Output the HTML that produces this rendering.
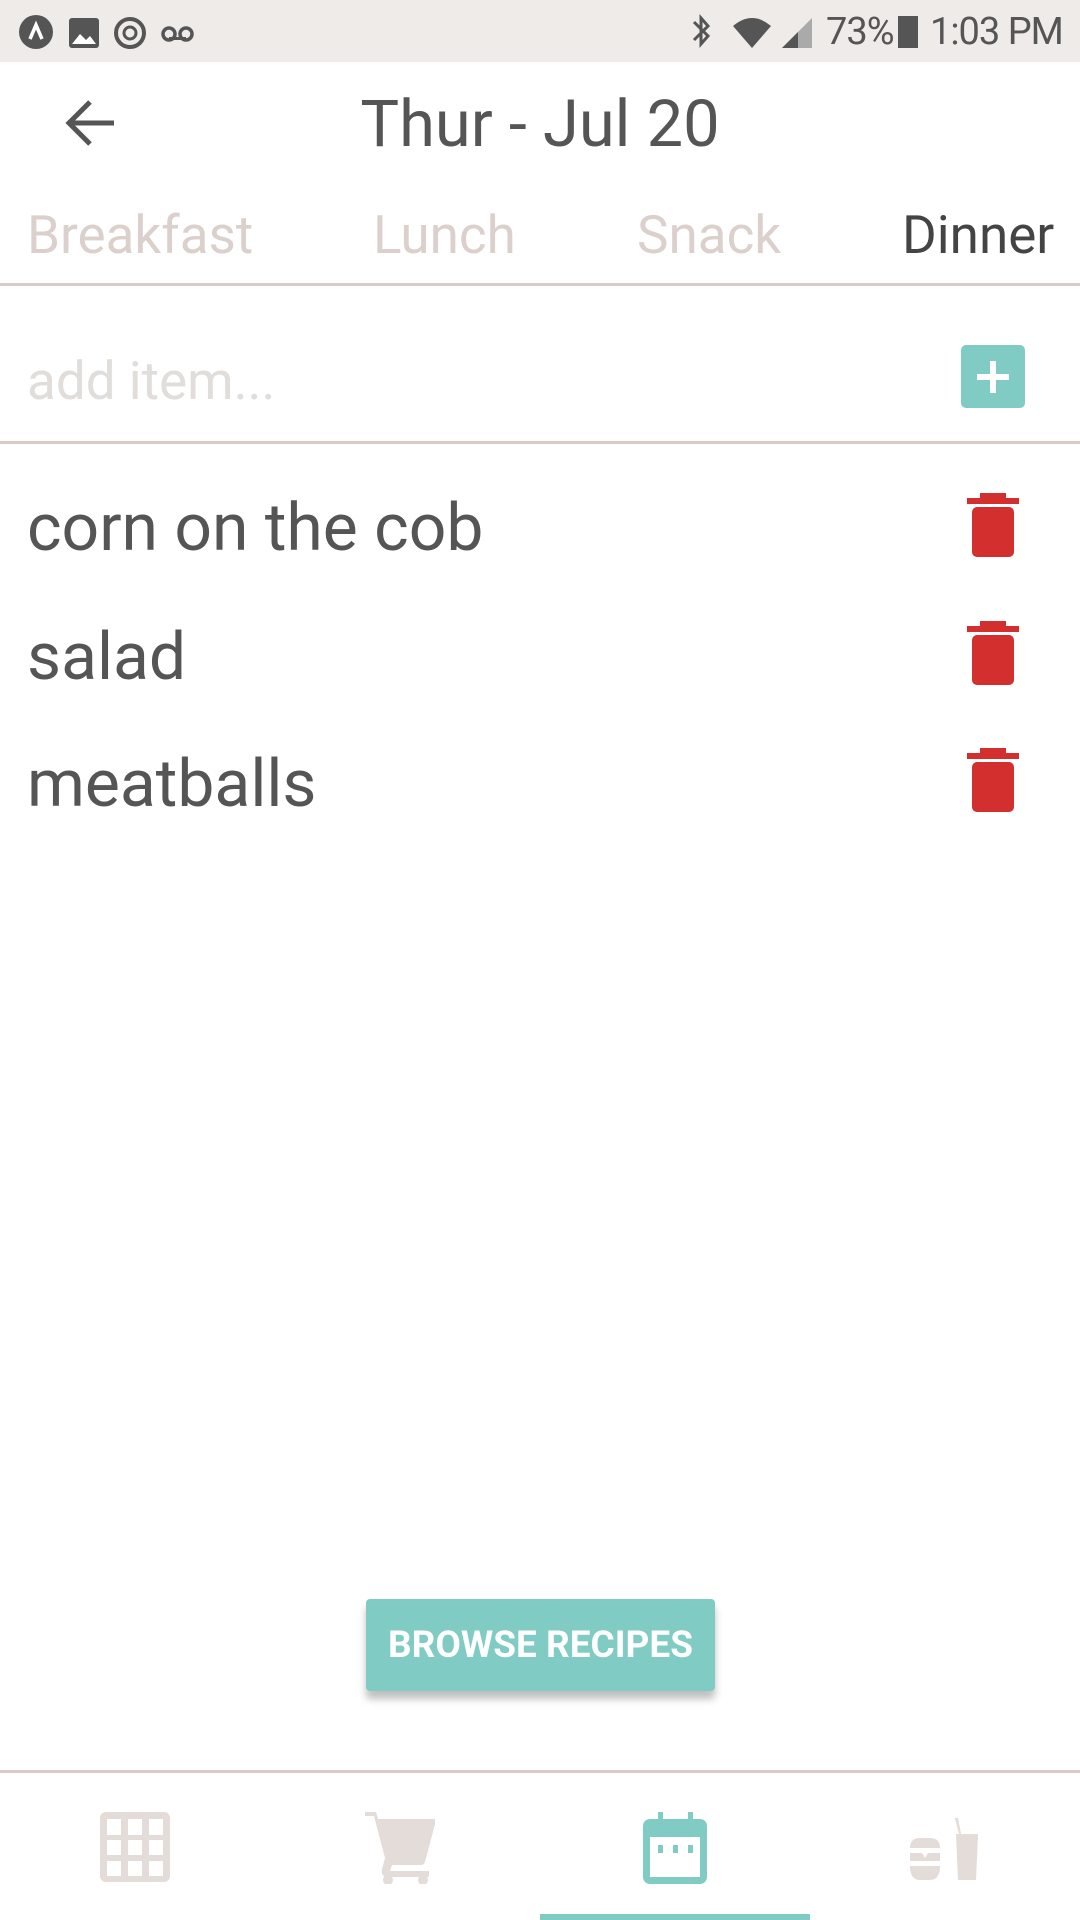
<!DOCTYPE html>
<html><head><meta charset="utf-8"><style>
*{margin:0;padding:0;box-sizing:border-box}
body{width:1080px;height:1920px;background:#fff;font-family:"Roboto","Liberation Sans",sans-serif;position:relative;overflow:hidden;color:#555}
.a{position:absolute}
.sb{left:0;top:0;width:1080px;height:62px;background:#eeebe9}
.t{white-space:nowrap}
.line{left:0;width:1080px;height:3px;background:#d8ccc8}
.item{left:27px;font-size:66px;color:#555;line-height:1}
.trash{left:967px;width:52px;height:64px}
</style></head><body>
<div class="a sb"></div>
<svg class="a" style="left:16px;top:14px" width="190" height="36" viewBox="0 0 190 36">
<circle cx="20" cy="18" r="17" fill="#555"/><path d="M14 25 L20 11 L26 25" stroke="#fff" stroke-width="3.5" fill="none"/>
<rect x="53" y="4" width="30" height="30" rx="3" fill="#555"/><path d="M56 30 L64 20 L70 26 L74 22 L80 30Z" fill="#fff"/>
<circle cx="114" cy="19" r="14" fill="none" stroke="#555" stroke-width="4"/><circle cx="114" cy="19" r="6" fill="none" stroke="#555" stroke-width="3"/>
<circle cx="153" cy="20" r="6" fill="none" stroke="#555" stroke-width="3.5"/><circle cx="170" cy="20" r="6" fill="none" stroke="#555" stroke-width="3.5"/><rect x="153" y="23" width="17" height="3" fill="#555"/>
</svg>
<svg class="a" style="left:686px;top:14px" width="130" height="36" viewBox="0 0 130 36">
<path d="M8 8 L22 22 L15 30 L15 4 L22 12 L8 26" stroke="#555" stroke-width="3" fill="none"/>
<path d="M47 12 Q66 -4 85 12 L66 34Z" fill="#555"/>
<path d="M96 34 L126 4 L126 34Z" fill="#aaa"/><path d="M96 34 L112 18 L112 34Z" fill="#555"/>
</svg>
<div class="a t" style="left:826px;top:10px;font-size:38px;color:#555;letter-spacing:-1px">73%</div>
<div class="a" style="left:898px;top:16px;width:20px;height:32px;background:#555"></div>
<div class="a t" style="left:930px;top:10px;font-size:38px;color:#555;letter-spacing:-1px">1:03 PM</div>

<svg class="a" style="left:64px;top:98px" width="54" height="50" viewBox="0 0 54 50">
<path d="M50 25 H6 M26 4 L5 25 L26 46" stroke="#555" stroke-width="5" fill="none"/>
</svg>
<div class="a t" style="left:0;width:1080px;text-align:center;top:86px;font-size:65px;color:#555">Thur - Jul 20</div>

<div class="a t" style="left:27px;top:204px;font-size:53px;color:#dcd0cc">Breakfast</div>
<div class="a t" style="left:373px;top:204px;font-size:53px;color:#dcd0cc">Lunch</div>
<div class="a t" style="left:637px;top:204px;font-size:53px;color:#dcd0cc">Snack</div>
<div class="a t" style="left:902px;top:204px;font-size:53px;color:#444">Dinner</div>
<div class="a line" style="top:283px"></div>

<div class="a t" style="left:27px;top:350px;font-size:53px;color:#e0dddb">add item...</div>
<div class="a" style="left:961px;top:345px;width:64px;height:63px;background:#80cbc4;border-radius:5px"></div>
<div class="a" style="left:977px;top:374px;width:32px;height:6px;background:#fff"></div>
<div class="a" style="left:990px;top:361px;width:6px;height:32px;background:#fff"></div>
<div class="a line" style="top:441px"></div>

<div class="a item t" style="top:496px">corn on the cob</div>
<div class="a item t" style="top:625px">salad</div>
<div class="a item t" style="top:752px">meatballs</div>
<svg class="a trash" style="top:493px" viewBox="0 0 52 64"><rect x="13" y="0" width="26" height="5" fill="#d32f2f"/><rect x="0" y="5" width="52" height="6" fill="#d32f2f"/><rect x="5" y="14" width="42" height="50" rx="5" fill="#d32f2f"/></svg>
<svg class="a trash" style="top:621px" viewBox="0 0 52 64"><rect x="13" y="0" width="26" height="5" fill="#d32f2f"/><rect x="0" y="5" width="52" height="6" fill="#d32f2f"/><rect x="5" y="14" width="42" height="50" rx="5" fill="#d32f2f"/></svg>
<svg class="a trash" style="top:748px" viewBox="0 0 52 64"><rect x="13" y="0" width="26" height="5" fill="#d32f2f"/><rect x="0" y="5" width="52" height="6" fill="#d32f2f"/><rect x="5" y="14" width="42" height="50" rx="5" fill="#d32f2f"/></svg>

<div class="a" style="left:366px;top:1599px;width:349px;height:92px;background:#80cbc4;border-radius:4px;box-shadow:0 8px 8px rgba(0,0,0,.25);color:#fff;font-weight:bold;font-size:37px;text-align:center;line-height:94px">BROWSE RECIPES</div>

<div class="a line" style="top:1770px"></div>
<svg class="a" style="left:100px;top:1812px" width="70" height="70" viewBox="0 0 70 70">
<rect x="0" y="0" width="70" height="70" rx="6" fill="#e3dcd8"/>
<g fill="#fff"><rect x="7" y="7" width="14" height="16"/><rect x="28" y="7" width="14" height="16"/><rect x="49" y="7" width="14" height="16"/><rect x="7" y="28" width="14" height="15"/><rect x="28" y="28" width="14" height="15"/><rect x="49" y="28" width="14" height="15"/><rect x="7" y="49" width="14" height="15"/><rect x="28" y="49" width="14" height="15"/><rect x="49" y="49" width="14" height="15"/></g></svg>
<svg class="a" style="left:365px;top:1812px" width="72" height="72" viewBox="0 0 72 72">
<path d="M0 0 H11 L13 7 H70 V12 L60 50 Q59 53 55 53 H27 L25 59 H64 V65 H21 Q16 64 17 57 L20 46 L9 4 H0Z" fill="#e3dcd8"/>
<ellipse cx="23" cy="68" rx="5" ry="5" fill="#e3dcd8"/><ellipse cx="58" cy="68" rx="5" ry="5" fill="#e3dcd8"/></svg>
<svg class="a" style="left:643px;top:1812px" width="64" height="72" viewBox="0 0 64 72">
<rect x="0" y="7" width="64" height="65" rx="7" fill="#80cbc4"/><rect x="15" y="0" width="5" height="10" fill="#80cbc4"/><rect x="45" y="0" width="5" height="10" fill="#80cbc4"/>
<rect x="7" y="25" width="50" height="40" fill="#fff"/><rect x="15" y="33" width="5" height="8" fill="#80cbc4"/><rect x="30" y="33" width="5" height="8" fill="#80cbc4"/><rect x="45" y="33" width="5" height="8" fill="#80cbc4"/></svg>
<svg class="a" style="left:910px;top:1816px" width="75" height="70" viewBox="0 0 75 70">
<path d="M0 32 Q0 22 10 22 H20 Q30 22 30 32Z" fill="#e3dcd8"/><path d="M0 37 H12 L15 42 L18 37 H30 V45 H0Z" fill="#e3dcd8"/><path d="M0 50 H30 Q30 64 20 64 H10 Q0 64 0 50Z" fill="#e3dcd8"/>
<path d="M45 2 L48 2 L51 18 H68 L66 64 H48 L46 18 H49Z" fill="#e3dcd8"/></svg>
<div class="a" style="left:540px;top:1914px;width:270px;height:6px;background:#80cbc4"></div>
</body></html>
